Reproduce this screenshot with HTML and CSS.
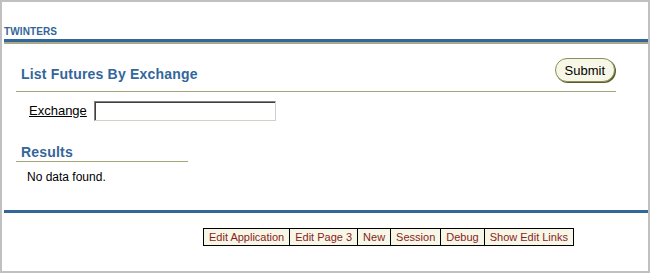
FILE: index.html
```html
<!DOCTYPE html>
<html lang="en">
<head>
  <meta charset="UTF-8">
  <meta name="viewport" content="width=device-width, initial-scale=1.0">
  <title>List Futures By Exchange</title>
  <link rel="stylesheet" href="styles.css">
</head>
<body>

<div class="frame">
  <div class="app-name">TWINTERS</div>
  <div class="top-rule"></div>

  <div class="region">
    <div class="region-header">
      <span class="region-title">List Futures By Exchange</span>
      <button class="submit">Submit</button>
    </div>
    <div class="field-row">
      <label class="field-label" for="exchange">Exchange</label>
      <input class="field-input" id="exchange" type="text">
    </div>
  </div>

  <div class="results">
    <div class="results-title">Results</div>
    <div class="results-body">No data found.</div>
  </div>

  <div class="bottom-rule"></div>

  <div class="dev-toolbar">
    <a href="#">Edit Application</a>
    <a href="#">Edit Page 3</a>
    <a href="#">New</a>
    <a href="#">Session</a>
    <a href="#">Debug</a>
    <a href="#">Show Edit Links</a>
  </div>
</div>

</body>
</html>
```

FILE: styles.css
```css
html, body {
  margin: 0;
  padding: 0;
  background: #fff;
}

.frame {
  width: 650px;
  height: 273px;
  box-sizing: border-box;
  border: 2px solid #c0c0c0;
  padding-left: 2px;
  font-family: "Liberation Sans", Arial, sans-serif;
  overflow: hidden;
}

.app-name {
  padding-top: 23px;
  font-size: 10px;
  font-weight: bold;
  line-height: 14px;
  letter-spacing: 0.1px;
  color: #336699;
}

.top-rule {
  border-top: 3px solid #336699;
  border-bottom: 2px solid #a8a88c;
}

.region {
  margin: 0 32px 0 12px;
}

.region-header {
  display: flex;
  justify-content: space-between;
  align-items: flex-end;
  padding: 14px 0 9px 5px;
  border-bottom: 1px solid #a5a57a;
}

.region-title,
.results-title {
  font-size: 14px;
  font-weight: bold;
  line-height: 16px;
  letter-spacing: 0.2px;
  color: #336699;
}

.submit {
  height: 24px;
  box-sizing: border-box;
  padding: 0 9px;
  margin-right: 1px;
  font-family: "Liberation Sans", Arial, sans-serif;
  font-size: 13px;
  color: #000;
  background: #f7f7e7;
  border: 1px solid #8c8c5c;
  border-radius: 12px;
  box-shadow: 1px 1px 0 #5c5c2e;
  cursor: pointer;
}

.field-row {
  display: flex;
  align-items: center;
  gap: 7px;
  margin-top: 9px;
  padding-left: 13px;
}

.field-label {
  font-size: 13px;
  line-height: 16px;
  color: #000;
  text-decoration: underline;
}

.field-input {
  width: 182px;
  height: 20px;
  box-sizing: border-box;
  margin: 0;
  padding: 0;
  border: 1px solid;
  border-color: #808080 #d4d0c8 #d4d0c8 #808080;
  box-shadow: inset 1px 1px 0 #404040;
  background: #fff;
}

.results {
  margin: 23px 0 0 12px;
}

.results-title {
  width: 167px;
  padding: 0 0 1px 5px;
  border-bottom: 1px solid #a5a57a;
}

.results-body {
  margin-top: 8px;
  padding-left: 11px;
  font-size: 12px;
  line-height: 14px;
  color: #000;
}

.bottom-rule {
  margin-top: 26px;
  border-top: 3px solid #336699;
}

.dev-toolbar {
  display: inline-flex;
  margin: 15px 0 0 199px;
  border: 1px solid #000;
  background: #f7f7e7;
}

.dev-toolbar a {
  padding: 0 5px;
  font-size: 11px;
  line-height: 16px;
  color: #8b1c1c;
  text-decoration: none;
  border-left: 1px solid #000;
}

.dev-toolbar a:first-child {
  border-left: none;
}
```
